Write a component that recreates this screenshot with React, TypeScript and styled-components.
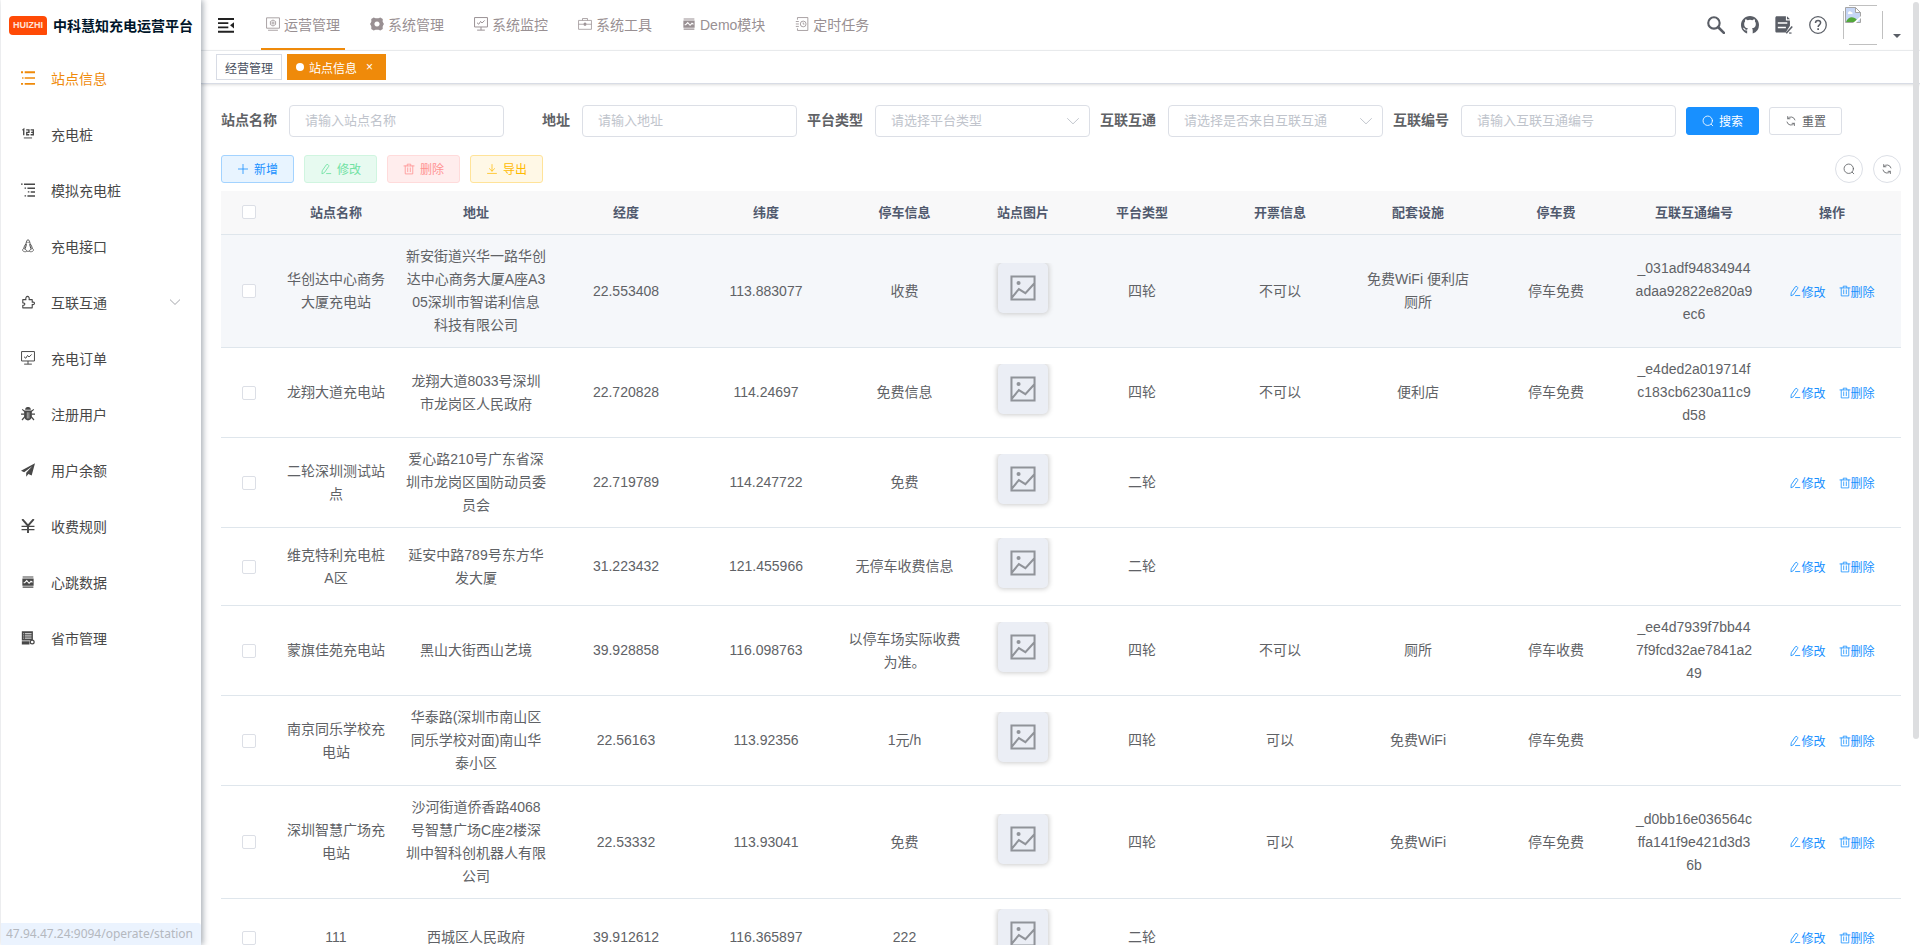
import React from 'react';
import styled, { createGlobalStyle, css } from 'styled-components';

const ACCENT = '#ef8a0a';
const BLUE = '#1890ff';

const GlobalStyle = createGlobalStyle`
  *, *::before, *::after { box-sizing: border-box; }
  body {
    margin: 0;
    background: #fff;
    color: #606266;
    font-family: "Liberation Sans", "Noto Sans CJK SC", sans-serif;
    font-size: 14px;
  }
  button, input, select { font-family: inherit; margin: 0; }
  a { color: inherit; text-decoration: none; }
  svg { display: block; flex: none; }
`;

/* ---------- icons ---------- */

type IconName = keyof typeof icons;

const line = (d: string, w = 64) => (
  <path d={d} fill="none" stroke="currentColor" strokeWidth={w} strokeLinecap="round" strokeLinejoin="round" />
);

const icons = {
  list: (
    <path fill="currentColor" d="M0 20h150v140H0zM270 20h754v140H270zM80 450h100v124H80zM270 450h754v124H270zM0 870h150v140H0zM270 870h754v140H270z" />
  ),
  number: (
    <g fill="none" stroke="currentColor" strokeWidth="100">
      <path d="M110 240l90-80v450M380 210h200v180H420v180h180M700 210h200v360H700M740 390h150" />
      <path d="M210 800h600" strokeWidth="70" />
    </g>
  ),
  tree: (
    <path fill="currentColor" d="M0 30h120v100H0zM220 30h804v120H220zM260 320h110v100H260zM470 320h554v110H470zM500 600h110v100H500zM710 600h314v110H710zM260 890h110v100H260zM470 890h554v110H470z" />
  ),
  penguin: (
    <g fill="none" stroke="currentColor" strokeWidth="72">
      <path d="M400 200c0-170 230-170 230 0 0 170 190 300 190 500M400 200c0 170-190 300-190 500M400 380l-90 330M630 380l90 330" />
      <path d="M210 690c-140 60-130 210 60 240 130 20 160-40 130-110zM820 690c140 60 130 210-60 240-130 20-160-40-130-110zM420 900h200M460 240h110" strokeWidth="56" />
    </g>
  ),
  puzzle: line('M130 340h230c-70-320 310-320 230 0h230v190c220-70 220 230 0 160v250H130V750c200 30 200-200 0-170z', 80),
  monitor: (
    <g fill="none" stroke="currentColor" strokeWidth="72">
      <path d="M40 40h944v690H40zM512 730v230M230 960h564" />
      <path d="M220 420l130 110 130-210 110 120 190-190" />
    </g>
  ),
  bug: (
    <g fill="currentColor">
      <path d="M300 200c0-270 424-270 424 0zM230 260h564v420c0 400-564 400-564 0z" />
      <path d="M0 480h260v90H0zM764 480h260v90H764zM60 200l60-60 190 170-60 60zM964 200l-60-60-190 170 60 60zM40 920l210-240 70 60-210 240zM984 920L774 680l-70 60 210 240z" />
      <path d="M430 380h40v470h-40zM560 380h40v470h-40z" fill="#fff" />
    </g>
  ),
  plane: <path fill="currentColor" d="M1024 10L0 560l230 110L820 230 380 720v290l160-210 240 110z" />,
  yuan: (
    <g fill="none" stroke="currentColor">
      <path strokeWidth="140" d="M90 10l422 480L934 10M512 480v544" />
      <path strokeWidth="90" d="M40 540h944M40 770h944" />
    </g>
  ),
  pulse: (
    <g>
      <path fill="currentColor" d="M120 110h784v80H120zM120 850h784v80H120zM100 260h824v520H100z" />
      <path fill="none" stroke="#fff" strokeWidth="76" d="M190 560h80l150-150 170 200 140-150 110 70" />
    </g>
  ),
  server: (
    <g>
      <path fill="currentColor" d="M60 20h810v680H60zM60 750h560v230H60z" />
      <path stroke="#fff" strokeWidth="66" d="M170 200h60M290 200h480M170 360h60M290 360h480M170 520h60M290 520h480" />
      <circle cx="820" cy="810" r="140" fill="#fff" stroke="currentColor" strokeWidth="90" />
    </g>
  ),
  system: (
    <g fill="none" stroke="currentColor" strokeWidth="60">
      <path d="M40 60h944v760H40zM150 970h724" />
      <path d="M512 220l190 110v220L512 660 322 550V330z" />
      <circle cx="512" cy="440" r="80" />
    </g>
  ),
  gear: (
    <path
      fill="currentColor"
      fillRule="evenodd"
      d="M270 30l140 70h204l140-70 180 120-10 170 40 100 60 92-60 92-40 100 10 170-180 120-140-70H410l-140 70-180-120 10-170-40-100-60-92 60-92 40-100-10-170zM512 320a192 192 0 1 0 1 0z"
    />
  ),
  toolbox: (
    <g fill="none" stroke="currentColor" strokeWidth="56">
      <path d="M40 250h944v650H40zM330 250V110h364v140M40 530h400M584 530h400" />
      <path d="M450 440h124v170H450z" fill="currentColor" />
    </g>
  ),
  job: (
    <g fill="none" stroke="currentColor" strokeWidth="60">
      <path d="M180 200V40h760v944H180V830M60 330h220M60 510h220M60 690h220" />
      <circle cx="600" cy="510" r="210" />
      <path d="M600 400v120h90" />
    </g>
  ),
  plus: line('M512 120v784M120 512h784', 68),
  edit: line('M170 890l20-230L540 150c70-90 260 30 200 140L390 800zM560 900h360', 74),
  trash: line('M80 250h864M190 250v680h644V250M360 240V100h304v140M400 420v320M624 420v320', 68),
  download: line('M512 130v560M290 480l222 220 222-220M130 890h764', 62),
  search: (
    <g fill="none" stroke="currentColor" strokeWidth="72" strokeLinecap="round">
      <circle cx="490" cy="490" r="400" />
      <path d="M790 790l130 130" />
    </g>
  ),
  refresh: line('M850 420A350 350 0 0 0 240 300M170 600a350 350 0 0 0 610 130M230 130v190h190M800 900V710H610', 72),
  chevron: line('M110 330l402 390 402-390', 70),
  picture: (
    <g>
      <path fill="none" stroke="currentColor" strokeWidth="74" d="M90 90h844v844H90zM90 880l270-330 240 150 330-360" />
      <circle cx="350" cy="330" r="74" fill="currentColor" />
    </g>
  ),
  fold: (
    <g fill="currentColor">
      <path d="M0 70h1024v120H0zM0 340h660v110H0zM0 610h660v110H0zM0 880h1024v120H0z" />
      <path d="M1024 330v410L770 535z" />
    </g>
  ),
  magnify: (
    <g fill="none" stroke="currentColor">
      <circle cx="395" cy="395" r="325" strokeWidth="120" />
      <path d="M640 640l320 320" strokeWidth="150" strokeLinecap="round" />
    </g>
  ),
  github: (
    <path
      fill="currentColor"
      transform="scale(64)"
      d="M8 0C3.58 0 0 3.58 0 8c0 3.54 2.29 6.53 5.47 7.59V12.9C3 13.3 2.6 11.8 2.3 11.4c-.3-.4-.9-.8-.5-1 1.3-.3 1.9 1.6 2.6 1.8.5.1.9 0 1.2-.2.1-.5.4-.9.6-1.1-2-.3-3.4-1.2-3.4-3.9 0-.9.3-1.6.8-2.1-.1-.6-.1-1.4.2-2.1.8 0 1.5.4 2.1.9a8 8 0 0 1 4.200 0c.6-.5 1.300-.9 2.100-.9.3.7.3 1.500.2 2.100.5.5.8 1.200.8 2.100 0 2.700-1.500 3.600-3.500 3.900.4.400.7 1 .7 1.700v2.990A8 8 0 0 0 16 8c0-4.420-3.580-8-8-8z"
    />
  ),
  document: (
    <g>
      <path fill="currentColor" d="M110 20h510v230h230v310L610 940H110c-60 0-90-30-90-90V110c0-60 30-90 90-90zM680 20l170 170H680z" />
      <path stroke="#fff" strokeWidth="80" d="M160 400h540M160 650h460" />
      <path stroke="currentColor" strokeWidth="90" d="M640 980l340-380" />
      <path stroke="currentColor" strokeWidth="70" d="M800 970h140" />
    </g>
  ),
  question: (
    <g fill="none" stroke="currentColor" strokeWidth="72">
      <circle cx="512" cy="512" r="470" />
      <path d="M370 400c0-200 290-190 290-10 0 120-140 110-140 240" strokeWidth="86" />
      <path d="M520 700v90" strokeWidth="96" />
    </g>
  ),
};

const Icon = ({ name, size = 14 }: { name: IconName; size?: number }) => (
  <svg width={size} height={size} viewBox="0 0 1024 1024" aria-hidden="true">
    {icons[name]}
  </svg>
);

/* ---------- shell ---------- */

const Shell = styled.div`
  display: flex;
  height: 100vh;
  padding-left: 1px;
  overflow: hidden;
  position: relative;
`;

const Sidebar = styled.aside`
  flex: none;
  width: 200px;
  background: #fff;
  box-shadow: 2px 0 6px rgba(0, 21, 41, 0.35);
  z-index: 2;
`;

const Brand = styled.a`
  display: flex;
  align-items: center;
  height: 50px;
  padding-left: 8px;
  gap: 6px;
  color: #001529;
  font-size: 14px;
  font-weight: 700;
  white-space: nowrap;
`;

const BrandMark = styled.span`
  width: 38px;
  height: 19px;
  border-radius: 4px 4px 1px 4px;
  background: #ff4a06;
  color: #ffe4d8;
  font-size: 9px;
  line-height: 19px;
  text-align: center;
`;

const SideItem = styled.a<{ $active?: boolean }>`
  display: flex;
  align-items: center;
  gap: 16px;
  height: 56px;
  padding: 0 20px;
  color: ${(p) => (p.$active ? ACCENT : '#484848')};
`;

const SideText = styled.span`
  flex: 1;
`;

const SideArrow = styled.span`
  color: #909399;
`;

const Main = styled.main`
  flex: 1;
  min-width: 0;
`;

const Navbar = styled.header`
  display: flex;
  align-items: center;
  height: 51px;
  border-bottom: 1px solid #f0f2f4;
  padding: 0 19px 0 17px;
`;

const PlainButton = styled.button`
  border: 0;
  padding: 0;
  background: none;
  color: inherit;
  cursor: pointer;
`;

const FoldButton = styled(PlainButton)`
  color: #222;
  margin-right: 17px;
`;

const TopMenu = styled.nav`
  display: flex;
  flex: 1;
  align-self: stretch;
`;

const TopItem = styled.a<{ $active?: boolean }>`
  display: flex;
  align-items: center;
  gap: 4px;
  height: 50px;
  margin: 0 10px;
  padding: 0 5px;
  border-bottom: 2px solid ${(p) => (p.$active ? ACCENT : 'transparent')};
  color: #999093;
  white-space: nowrap;
`;

const NavTools = styled.div`
  display: flex;
  align-items: center;
  gap: 16px;
  color: #5a5e66;
`;

/* only the straight part of each edge is drawn, the corners stay open */
const Avatar = styled.span`
  width: 40px;
  height: 40px;
  padding: 2px;
  background:
    linear-gradient(#c0c0c0, #c0c0c0) center top / 28px 1px no-repeat,
    linear-gradient(#c0c0c0, #c0c0c0) center bottom / 28px 1px no-repeat,
    linear-gradient(#c0c0c0, #c0c0c0) left center / 1px 28px no-repeat,
    linear-gradient(#c0c0c0, #c0c0c0) right center / 1px 28px no-repeat;
`;

const UserMenu = styled(PlainButton)`
  display: flex;
  align-items: flex-end;
  gap: 10px;
`;

const Caret = styled.span`
  border: 4px solid transparent;
  border-top-color: #5a5e66;
  margin-bottom: 3px;
`;

const TagsBar = styled.nav`
  display: flex;
  align-items: center;
  gap: 5px;
  height: 33px;
  padding: 0 15px;
  border-bottom: 1px solid #d8dce5;
  box-shadow: 0 1px 3px 0 rgba(0, 0, 0, 0.12), 0 0 3px 0 rgba(0, 0, 0, 0.04);
`;

const Tag = styled.a<{ $active?: boolean }>`
  display: flex;
  align-items: center;
  height: 26px;
  padding: 0 8px;
  gap: 5px;
  border: 1px solid ${(p) => (p.$active ? ACCENT : '#d8dce5')};
  background: ${(p) => (p.$active ? ACCENT : '#fff')};
  color: ${(p) => (p.$active ? '#fff' : '#495060')};
  font-size: 12px;
`;

const TagDot = styled.span`
  width: 8px;
  height: 8px;
  border-radius: 50%;
  background: #fff;
`;

const TagClose = styled.span`
  width: 15px;
  font-size: 12px;
  line-height: 16px;
  text-align: center;
`;

/* ---------- content ---------- */

const Content = styled.section`
  padding: 21px 19px 0 20px;
`;

const Filters = styled.form`
  display: flex;
  align-items: center;
  gap: 10px;
  height: 32px;
`;

const Field = styled.div`
  display: flex;
  align-items: center;
`;

const FieldLabel = styled.label`
  width: 68px;
  padding-right: 12px;
  line-height: 30px;
  height: 32px;
  text-align: right;
  font-weight: 700;
  white-space: nowrap;
`;

const controlStyle = css`
  width: 215px;
  height: 32px;
  padding: 0 15px 2px;
  border: 1px solid #dcdfe6;
  border-radius: 4px;
  background: #fff;
  font-size: 13px;
  outline: none;
`;

const TextBox = styled.input`
  ${controlStyle}
  color: #606266;
  &::placeholder { color: #c0c4cc; opacity: 1; }
`;

const SelectWrap = styled.div`
  display: grid;
  align-items: center;
  color: #c0c4cc;
  & > * { grid-area: 1 / 1; }
  & > svg { justify-self: end; margin-right: 10px; pointer-events: none; }
`;

const Select = styled.select`
  ${controlStyle}
  color: #c0c4cc;
  appearance: none;
`;

type Tone = 'primary' | 'default' | 'blue' | 'green' | 'red' | 'yellow';

const tones: Record<Tone, [string, string, string]> = {
  primary: ['#fff', BLUE, BLUE],
  default: ['#606266', '#fff', '#dcdfe6'],
  blue: [BLUE, '#e8f4ff', '#a3d3ff'],
  green: ['#71e2a3', '#e7faf0', '#d0f5e0'],
  red: ['#ff9292', '#ffeded', '#ffdbdb'],
  yellow: ['#ffba00', '#fff8e6', '#ffe399'],
};

const Button = styled.button<{ $tone: Tone }>`
  display: flex;
  align-items: center;
  justify-content: center;
  gap: 5px;
  width: 73px;
  height: 28px;
  padding: 0 0 1px;
  border: 1px solid ${(p) => tones[p.$tone][2]};
  border-radius: 3px;
  background: ${(p) => tones[p.$tone][1]};
  color: ${(p) => tones[p.$tone][0]};
  font-size: 12px;
  cursor: pointer;
`;

const Toolbar = styled.div`
  display: flex;
  gap: 10px;
  margin: 18px 0 8px;
`;

const Spacer = styled.div`
  flex: 1;
`;

const RoundButton = styled(Button)`
  width: 28px;
  border-radius: 50%;
`;

const Table = styled.table`
  width: 100%;
  border-collapse: separate;
  border-spacing: 0;
  table-layout: fixed;
  text-align: center;
  line-height: 23px;
`;

const Th = styled.th`
  height: 44px;
  padding: 0 10px 1px;
  border-bottom: 1px solid #dfe6ec;
  background: #f8f8f9;
  color: #515a6e;
  font-size: 13px;
  font-weight: 700;
`;

const Td = styled.td`
  padding: 10px;
  border-bottom: 1px solid #dfe6ec;
  word-break: break-all;
  vertical-align: middle;
`;

const Row = styled.tr<{ $hover?: boolean }>`
  background: ${(p) => (p.$hover ? '#f5f7fa' : '#fff')};
`;

const Check = styled.input`
  appearance: none;
  display: block;
  width: 14px;
  height: 14px;
  margin: 0 auto;
  border: 1px solid #dcdfe6;
  border-radius: 2px;
  background: #fff;
`;

const ThumbCell = styled.div`
  display: flex;
  justify-content: center;
  height: 57px;
  overflow: hidden;
`;

const Thumb = styled.span`
  display: flex;
  align-items: center;
  justify-content: center;
  width: 50px;
  height: 50px;
  border-radius: 5px;
  background: #ebeef5;
  box-shadow: 0 0 5px 1px #ccc;
  color: #909399;
`;

const Actions = styled.div`
  display: flex;
  justify-content: center;
  gap: 13px;
`;

const ActionButton = styled(PlainButton)`
  display: flex;
  align-items: center;
  color: ${BLUE};
  font-size: 12px;
  white-space: nowrap;
`;

const ScrollThumb = styled.div`
  position: absolute;
  top: 2px;
  right: 1px;
  width: 6px;
  height: 78%;
  border-radius: 3px;
  background: #dddee0;
  z-index: 3;
`;

const StatusBubble = styled.div`
  position: absolute;
  left: 1px;
  bottom: 0;
  height: 22px;
  padding: 0 8px 0 5px;
  border-radius: 0 3px 0 0;
  background: #ebf3fe;
  color: #b4b8be;
  font: 12px/22px "Noto Sans", sans-serif;
  z-index: 4;
`;

/* ---------- data ---------- */

const sideItems: { icon: IconName; text: string; sub?: boolean }[] = [
  { icon: 'list', text: '站点信息' },
  { icon: 'number', text: '充电桩' },
  { icon: 'tree', text: '模拟充电桩' },
  { icon: 'penguin', text: '充电接口' },
  { icon: 'puzzle', text: '互联互通', sub: true },
  { icon: 'monitor', text: '充电订单' },
  { icon: 'bug', text: '注册用户' },
  { icon: 'plane', text: '用户余额' },
  { icon: 'yuan', text: '收费规则' },
  { icon: 'pulse', text: '心跳数据' },
  { icon: 'server', text: '省市管理' },
];

const topItems: { icon: IconName; text: string }[] = [
  { icon: 'system', text: '运营管理' },
  { icon: 'gear', text: '系统管理' },
  { icon: 'monitor', text: '系统监控' },
  { icon: 'toolbox', text: '系统工具' },
  { icon: 'pulse', text: 'Demo模块' },
  { icon: 'job', text: '定时任务' },
];

const filters = [
  { id: 'name', label: '站点名称', hint: '请输入站点名称' },
  { id: 'address', label: '地址', hint: '请输入地址' },
  { id: 'platform', label: '平台类型', hint: '请选择平台类型', select: true },
  { id: 'linked', label: '互联互通', hint: '请选择是否来自互联互通', select: true },
  { id: 'linkNo', label: '互联编号', hint: '请输入互联互通编号' },
];

const columns: { title: string; width?: number }[] = [
  { title: '站点名称', width: 120 },
  { title: '地址', width: 160 },
  { title: '经度', width: 140 },
  { title: '纬度', width: 140 },
  { title: '停车信息', width: 137 },
  { title: '站点图片', width: 100 },
  { title: '平台类型' },
  { title: '开票信息' },
  { title: '配套设施' },
  { title: '停车费' },
  { title: '互联互通编号' },
  { title: '操作' },
];

// name, address, longitude, latitude, parking | platform, invoice, facilities, fee, link number
const stations: [string[], string[]][] = [
  [['华创达中心商务大厦充电站', '新安街道兴华一路华创达中心商务大厦A座A305深圳市智诺利信息科技有限公司', '22.553408', '113.883077', '收费'], ['四轮', '不可以', '免费WiFi 便利店 厕所', '停车免费', '_031adf94834944adaa92822e820a9ec6']],
  [['龙翔大道充电站', '龙翔大道8033号深圳市龙岗区人民政府', '22.720828', '114.24697', '免费信息'], ['四轮', '不可以', '便利店', '停车免费', '_e4ded2a019714fc183cb6230a11c9d58']],
  [['二轮深圳测试站点', '爱心路210号广东省深圳市龙岗区国防动员委员会', '22.719789', '114.247722', '免费'], ['二轮', '', '', '', '']],
  [['维克特利充电桩A区', '延安中路789号东方华发大厦', '31.223432', '121.455966', '无停车收费信息'], ['二轮', '', '', '', '']],
  [['蒙旗佳苑充电站', '黑山大街西山艺境', '39.928858', '116.098763', '以停车场实际收费为准。'], ['四轮', '不可以', '厕所', '停车收费', '_ee4d7939f7bb447f9fcd32ae7841a249']],
  [['南京同乐学校充电站', '华泰路(深圳市南山区同乐学校对面)南山华泰小区', '22.56163', '113.92356', '1元/h'], ['四轮', '可以', '免费WiFi', '停车免费', '']],
  [['深圳智慧广场充电站', '沙河街道侨香路4068号智慧广场C座2楼深圳中智科创机器人有限公司', '22.53332', '113.93041', '免费'], ['四轮', '可以', '免费WiFi', '停车免费', '_d0bb16e036564cffa141f9e421d3d36b']],
  [['111', '西城区人民政府', '39.912612', '116.365897', '222'], ['二轮', '', '', '', '']],
];

const BrokenImage = () => (
  <svg width="16" height="16" viewBox="0 0 16 16" aria-hidden="true">
    <path d="M.5.5h10l5 5v10H.5z" fill="#c6d6f6" stroke="#a5a5a5" />
    <path d="M10.500.5v5h5z" fill="#fff" stroke="#a5a5a5" />
    <path d="M3 6c0-2 3-2 3-1 2 0 2 2 1 2H3z" fill="#fff" />
    <path d="M1 15c2-6 8-6 11-2l-2 2z" fill="#52a83a" />
    <path d="M8 16l8-7v2l-5 5z" fill="#fff" />
  </svg>
);

/* ---------- page ---------- */

export default function App() {
  return (
    <Shell>
      <GlobalStyle />
      <Sidebar>
        <Brand href="#">
          <BrandMark>HUIZHI</BrandMark>
          中科慧知充电运营平台
        </Brand>
        <nav>
          {sideItems.map((item, i) => (
            <SideItem key={item.text} href="#" $active={i === 0}>
              <Icon name={item.icon} />
              <SideText>{item.text}</SideText>
              {item.sub && (
                <SideArrow>
                  <Icon name="chevron" size={12} />
                </SideArrow>
              )}
            </SideItem>
          ))}
        </nav>
      </Sidebar>

      <Main>
        <Navbar>
          <FoldButton type="button" aria-label="收起菜单">
            <Icon name="fold" size={16} />
          </FoldButton>
          <TopMenu>
            {topItems.map((item, i) => (
              <TopItem key={item.text} href="#" $active={i === 0}>
                <Icon name={item.icon} />
                {item.text}
              </TopItem>
            ))}
          </TopMenu>
          <NavTools>
            <PlainButton type="button" aria-label="搜索"><Icon name="magnify" size={18} /></PlainButton>
            <PlainButton type="button" aria-label="源码"><Icon name="github" size={18} /></PlainButton>
            <PlainButton type="button" aria-label="文档"><Icon name="document" size={18} /></PlainButton>
            <PlainButton type="button" aria-label="帮助"><Icon name="question" size={18} /></PlainButton>
            <UserMenu type="button" aria-label="用户">
              <Avatar><BrokenImage /></Avatar>
              <Caret />
            </UserMenu>
          </NavTools>
        </Navbar>
        <TagsBar>
          <Tag href="#">经营管理</Tag>
          <Tag href="#" $active>
            <TagDot />
            站点信息
            <TagClose>×</TagClose>
          </Tag>
        </TagsBar>

        <Content>
          <Filters>
            {filters.map((f) => (
              <Field key={f.id}>
                <FieldLabel htmlFor={f.id}>{f.label}</FieldLabel>
                {f.select ? (
                  <SelectWrap>
                    <Select id={f.id}>
                      <option>{f.hint}</option>
                    </Select>
                    <Icon name="chevron" />
                  </SelectWrap>
                ) : (
                  <TextBox id={f.id} placeholder={f.hint} />
                )}
              </Field>
            ))}
            <Button type="button" $tone="primary"><Icon name="search" size={12} />搜索</Button>
            <Button type="button" $tone="default"><Icon name="refresh" size={12} />重置</Button>
          </Filters>

          <Toolbar>
            <Button type="button" $tone="blue"><Icon name="plus" size={12} />新增</Button>
            <Button type="button" $tone="green"><Icon name="edit" size={12} />修改</Button>
            <Button type="button" $tone="red"><Icon name="trash" size={12} />删除</Button>
            <Button type="button" $tone="yellow"><Icon name="download" size={12} />导出</Button>
            <Spacer />
            <RoundButton type="button" $tone="default" aria-label="搜索"><Icon name="search" size={12} /></RoundButton>
            <RoundButton type="button" $tone="default" aria-label="刷新"><Icon name="refresh" size={12} /></RoundButton>
          </Toolbar>

          <Table>
            <colgroup>
              <col width={55} />
              {columns.map((c) => <col key={c.title} width={c.width} />)}
            </colgroup>
            <thead>
              <tr>
                <Th><Check type="checkbox" aria-label="全选" /></Th>
                {columns.map((c) => <Th key={c.title}>{c.title}</Th>)}
              </tr>
            </thead>
            <tbody>
              {stations.map(([before, after], r) => (
                <Row key={before[0]} $hover={r === 0}>
                  <Td><Check type="checkbox" aria-label={before[0]} /></Td>
                  {before.map((v, i) => <Td key={i}>{v}</Td>)}
                  <Td>
                    <ThumbCell>
                      <Thumb><Icon name="picture" size={28} /></Thumb>
                    </ThumbCell>
                  </Td>
                  {after.map((v, i) => <Td key={i}>{v}</Td>)}
                  <Td>
                    <Actions>
                      <ActionButton type="button"><Icon name="edit" size={12} />修改</ActionButton>
                      <ActionButton type="button"><Icon name="trash" size={12} />删除</ActionButton>
                    </Actions>
                  </Td>
                </Row>
              ))}
            </tbody>
          </Table>
        </Content>
      </Main>
      <ScrollThumb />
      <StatusBubble>47.94.47.24:9094/operate/station</StatusBubble>
    </Shell>
  );
}
